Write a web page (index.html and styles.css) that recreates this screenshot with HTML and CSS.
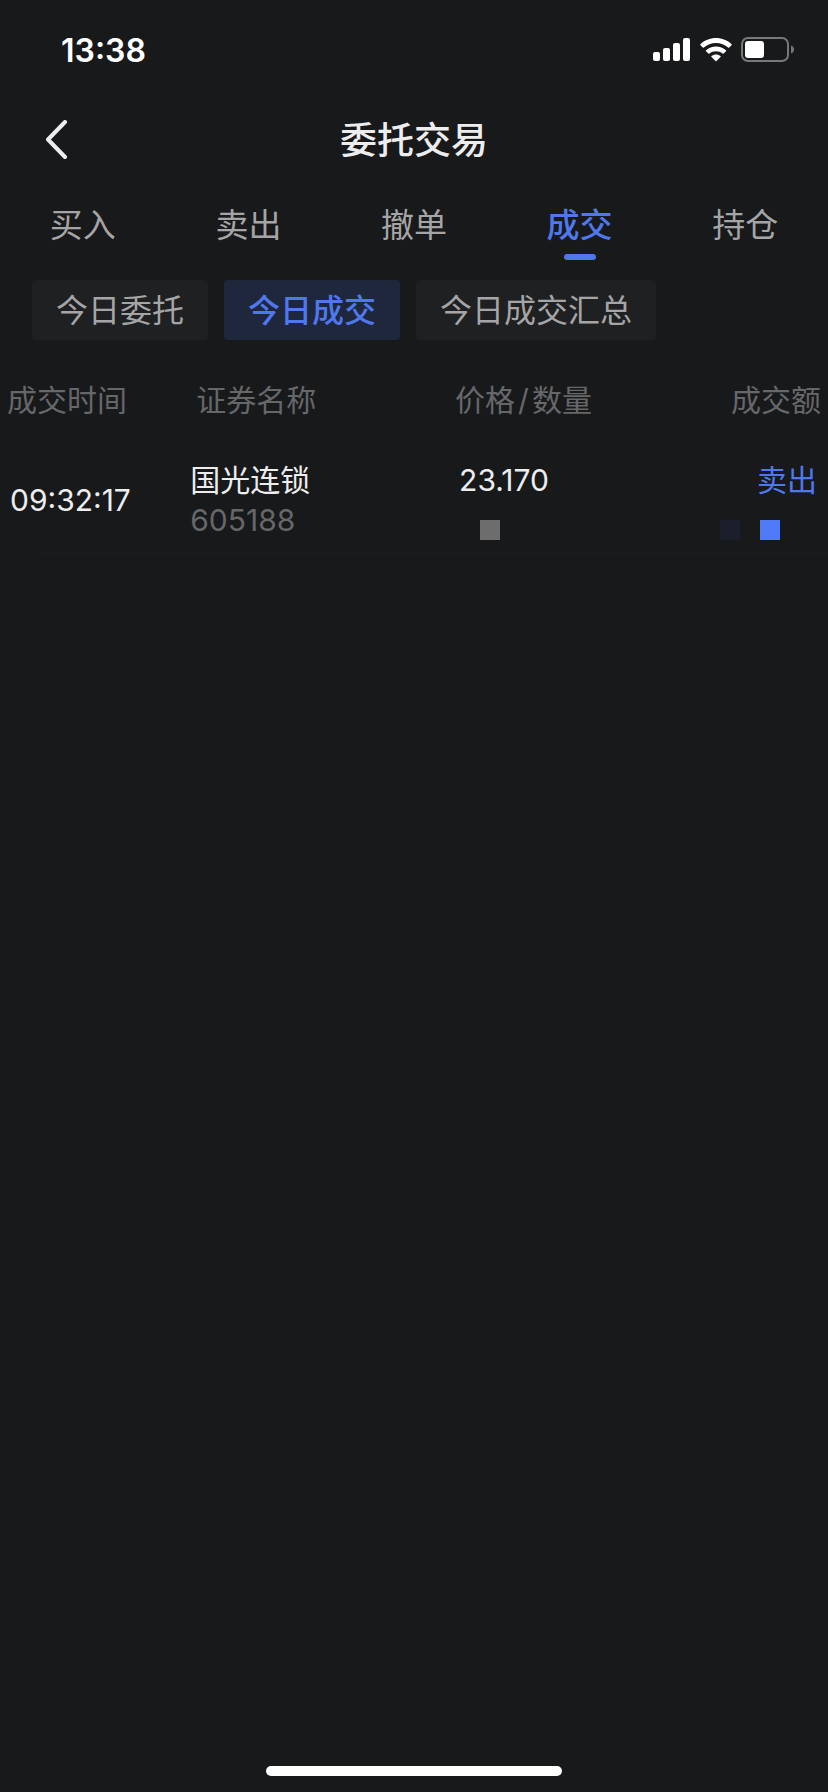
FILE: index.html
```html
<!DOCTYPE html>
<html lang="zh-CN">
<head>
<meta charset="utf-8">
<meta name="viewport" content="width=device-width, initial-scale=1">
<title>委托交易</title>
<link rel="stylesheet" href="styles.css">
</head>
<body>
<div class="screen">
  <div class="status">
    <time class="clock">13:38</time>
    <div class="indicators">
      <svg class="signal" width="38" height="24" viewBox="0 0 38 24" fill="#fff" aria-hidden="true">
        <rect x="0" y="14" width="7" height="9" rx="2"/>
        <rect x="10" y="10" width="7" height="13" rx="2"/>
        <rect x="20" y="5" width="7" height="18" rx="2"/>
        <rect x="30" y="0" width="7" height="23" rx="2"/>
      </svg>
      <svg class="wifi" width="32" height="24" viewBox="0 0 32 24" fill="#fff" aria-hidden="true">
        <path d="M16 0C22 0 27.500 2.300 31.600 6.200Q32 6.700 31.600 7.200L29.200 9.600Q28.700 10 28.200 9.600C24.900 6.500 20.600 4.900 16 4.900S7.100 6.500 3.800 9.600Q3.300 10 2.800 9.600L.4 7.200Q0 6.700 .4 6.200C4.500 2.300 10 0 16 0Z"/>
        <path d="M16 8.400C19.800 8.400 23.300 9.800 26 12.200Q26.400 12.700 26 13.200L23.600 15.600Q23.100 16 22.600 15.600C20.800 14 18.500 13.200 16 13.200S11.200 14 9.400 15.600Q8.900 16 8.400 15.600L6 13.200Q5.600 12.700 6 12.200C8.700 9.800 12.200 8.400 16 8.400Z"/>
        <path d="M16 16.400C17.700 16.400 19.300 17 20.500 18Q21 18.500 20.500 19L16.500 23Q16 23.400 15.500 23L11.500 19Q11 18.500 11.500 18C12.700 17 14.300 16.400 16 16.400Z"/>
      </svg>
      <svg class="battery" width="54" height="26" viewBox="0 0 54 26" aria-hidden="true">
        <rect x="1" y="1" width="46" height="23" rx="6" fill="none" stroke="#77787a" stroke-width="2"/>
        <rect x="4" y="4" width="19" height="17" rx="3" fill="#fff"/>
        <path d="M50 8.500C52 9.200 53 10.600 53 12.500S52 15.800 50 16.500Z" fill="#77787a"/>
      </svg>
    </div>
  </div>

  <header class="navbar">
    <button class="back" type="button" aria-label="返回">
      <svg width="24" height="40" viewBox="0 0 24 40" fill="none" stroke="#ededee" stroke-width="4" stroke-linecap="round" stroke-linejoin="round" aria-hidden="true"><path d="M20 2 3 19.500 20 37"/></svg>
    </button>
    <h1 class="title">委托交易</h1>
  </header>

  <nav class="tabs" aria-label="交易">
    <button class="tab" type="button">买入</button>
    <button class="tab" type="button">卖出</button>
    <button class="tab" type="button">撤单</button>
    <button class="tab tab-active" type="button" aria-current="page">成交</button>
    <button class="tab" type="button">持仓</button>
  </nav>

  <div class="chips">
    <button class="chip" type="button">今日委托</button>
    <button class="chip chip-active" type="button" aria-pressed="true">今日成交</button>
    <button class="chip" type="button">今日成交汇总</button>
  </div>

  <table class="deals">
    <colgroup><col class="col-time"><col class="col-name"><col class="col-price"><col class="col-amount"></colgroup>
    <thead>
      <tr><th class="time">成交时间</th><th class="name">证券名称</th><th class="price">价格<span class="slash">/</span>数量</th><th class="amount">成交额</th></tr>
    </thead>
    <tbody>
      <tr>
        <td class="time">09:32:17</td>
        <td class="name"><div class="line">国光连锁</div><div class="line code">605188</div></td>
        <td class="price"><div class="line">23.170</div><div class="line masked"><i class="block grey"></i></div></td>
        <td class="amount"><div class="line sell">卖出</div><div class="line masked"><i class="block navy"></i><i class="block blue"></i></div></td>
      </tr>
    </tbody>
  </table>
  <hr class="divider">

  <div class="home-bar"></div>
</div>
</body>
</html>
```

FILE: styles.css
```css
* { box-sizing: border-box; }

body {
  margin: 0;
  background: #18191b;
  color: #ededee;
  font-family: Inter, "Noto Sans CJK SC", sans-serif;
}

button {
  border: 0;
  padding: 0;
  background: none;
  color: inherit;
  font: inherit;
}

.screen {
  display: flex;
  flex-direction: column;
  min-height: 100vh;
}

.status {
  display: flex;
  justify-content: space-between;
  align-items: center;
  height: 100px;
  padding: 0 33px 0 61px;
}

.clock {
  color: #fff;
  font-size: 32px;
  font-weight: 600;
}

.indicators {
  display: flex;
  align-items: center;
  gap: 9px;
}

.navbar {
  display: grid;
  grid-template-columns: 96px 1fr 96px;
  align-items: center;
  height: 80px;
}

.back {
  display: flex;
  padding-left: 45px;
}

.title {
  margin: 0;
  padding-bottom: 4px;
  text-align: center;
  font-size: 37px;
  font-weight: 500;
}

.tabs {
  display: grid;
  grid-template-columns: repeat(5, 1fr);
  height: 80px;
  color: #a5a5a6;
  font-size: 33px;
}

.tab {
  display: flex;
  flex-direction: column;
  align-items: center;
  padding-top: 20px;
  line-height: 50px;
}

.tab-active {
  color: #4f78ec;
  font-weight: 500;
}

.tab-active::after {
  content: "";
  width: 32px;
  height: 6px;
  margin-top: 4px;
  border-radius: 3px;
  background: #4f78ec;
}

.chips {
  display: flex;
  gap: 16px;
  padding: 20px 32px;
}

.chip {
  height: 60px;
  padding: 2px 24px 0;
  border-radius: 4px;
  background: #1f2022;
  color: #a5a5a6;
  font-size: 32px;
  line-height: 58px;
}

.chip-active {
  background: #1f273d;
  color: #4f78ec;
  font-weight: 500;
}

.deals {
  width: 100%;
  table-layout: fixed;
  border-collapse: collapse;
  font-size: 30px;
}

.col-time { width: 22%; }
.col-name { width: 32%; }
.col-price { width: 27%; }

.deals th {
  height: 80px;
  padding: 0 0 4px;
  color: #666769;
  font-weight: 400;
  text-align: left;
}

.deals td { padding: 20px 0 13px; }

.deals th.time { padding-left: 7px; }
.deals td.time { padding-left: 10px; }
.deals th.name { padding-left: 14px; }
.deals td.name { padding-left: 8px; }
.deals th.price { padding-left: 8px; }
.deals td.price { padding-left: 12px; }
.deals th.amount { padding-right: 7px; text-align: right; }
.deals td.amount { padding-right: 11px; text-align: right; }

.slash { padding: 0 3px; }

.line {
  height: 40px;
  line-height: 40px;
}

.code { color: #666769; }
.sell { color: #4f78ec; }

.masked {
  display: flex;
  align-items: flex-end;
  gap: 20px;
}

.price .masked { padding-left: 21px; }

.amount .masked {
  justify-content: flex-end;
  padding-right: 37px;
}

.block {
  width: 20px;
  height: 20px;
}

.grey { background: #6d6d6d; }
.navy { background: #1b1e2b; }
.blue { background: #4f7af8; }

.divider {
  height: 1px;
  margin: 0 0 0 40px;
  border: 0;
  background: #1b1b20;
}

.home-bar {
  width: 296px;
  height: 10px;
  margin: auto auto 16px;
  border-radius: 5px;
  background: #fff;
}
```
